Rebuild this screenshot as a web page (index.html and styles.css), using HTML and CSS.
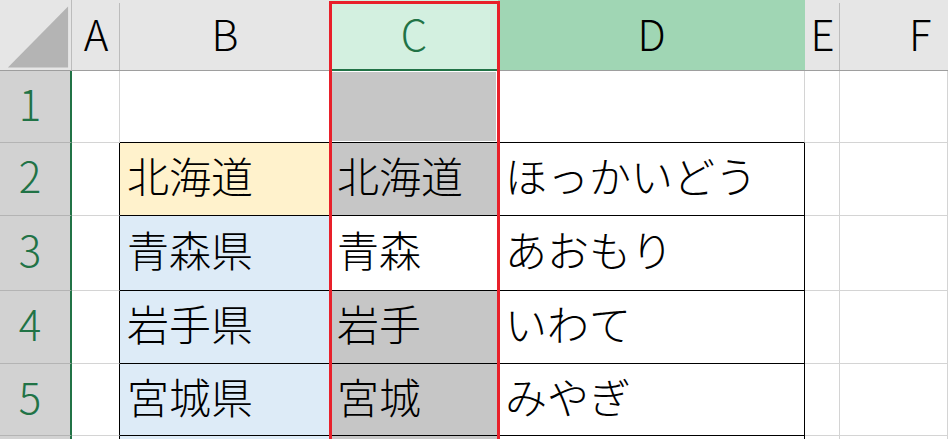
FILE: index.html
```html
<!DOCTYPE html>
<html lang="ja">
<head>
    <meta charset="utf-8" />
    <title>列の選択</title>
    <link rel="stylesheet" href="styles.css">
</head>
<body>
    <div class="sheet">
        <!-- 見出し行 -->
        <div class="cell corner">
            <svg width="72" height="71" viewBox="0 0 72 71"><polygon points="8,68 69,6 69,68" fill="#b4b4b4" /></svg>
        </div>
        <div class="cell ch">A</div>
        <div class="cell ch">B</div>
        <div class="cell ch sel">C</div>
        <div class="cell ch part">D</div>
        <div class="cell ch">E</div>
        <div class="cell ch last">F</div>

        <!-- 1 -->
        <div class="cell rh">1</div>
        <div class="cell"></div>
        <div class="cell bb"></div>
        <div class="cell bb gry active"></div>
        <div class="cell bb"></div>
        <div class="cell"></div>
        <div class="cell"></div>

        <!-- 2 -->
        <div class="cell rh">2</div>
        <div class="cell br"></div>
        <div class="cell bd yel">北海道</div>
        <div class="cell bd gry">北海道</div>
        <div class="cell bd">ほっかいどう</div>
        <div class="cell"></div>
        <div class="cell"></div>

        <!-- 3 -->
        <div class="cell rh">3</div>
        <div class="cell br"></div>
        <div class="cell bd blu">青森県</div>
        <div class="cell bd">青森</div>
        <div class="cell bd">あおもり</div>
        <div class="cell"></div>
        <div class="cell"></div>

        <!-- 4 -->
        <div class="cell rh">4</div>
        <div class="cell br"></div>
        <div class="cell bd blu">岩手県</div>
        <div class="cell bd gry">岩手</div>
        <div class="cell bd">いわて</div>
        <div class="cell"></div>
        <div class="cell"></div>

        <!-- 5 -->
        <div class="cell rh">5</div>
        <div class="cell br"></div>
        <div class="cell bd blu">宮城県</div>
        <div class="cell bd gry">宮城</div>
        <div class="cell bd">みやぎ</div>
        <div class="cell"></div>
        <div class="cell"></div>

        <!-- 6 (画面の下端で切れる行) -->
        <div class="cell rh"></div>
        <div class="cell br"></div>
        <div class="cell bd blu"></div>
        <div class="cell bd gry"></div>
        <div class="cell bd"></div>
        <div class="cell"></div>
        <div class="cell"></div>

        <!-- 赤枠 -->
        <div class="mark"></div>
    </div>
</body>
</html>
```

FILE: styles.css
```css
html, body {
    margin: 0;
    padding: 0;
    background: #fff;
    overflow: hidden;
}

.sheet {
    position: relative;
    display: grid;
    grid-template-columns: 72px 48px 210px 168px 307px 35px 108px;
    grid-template-rows: 71px 72px 73px 75px 73px 72px 60px;
    width: 948px;
    height: 439px;
    overflow: hidden;
    font-family: "Noto Sans CJK JP", "Noto Sans", sans-serif;
    font-size: 42px;
    font-weight: 300;
    color: #000;
}

.cell {
    box-sizing: border-box;
    display: flex;
    align-items: center;
    padding: 0 0 8px 7px;
    border-right: 1px solid #d4d4d4;
    border-bottom: 1px solid #d4d4d4;
    white-space: nowrap;
    overflow: hidden;
    line-height: 1;
}

/* 見出し */
.corner {
    padding: 0;
    background: #e6e6e6;
    border-right: 1px solid #bcbcbc;
    border-bottom: 1px solid #9e9e9e;
}

    .corner svg {
        display: block;
    }

.ch {
    justify-content: center;
    padding: 0 0 4px 0;
    border-right: 0;
    border-bottom: 1px solid #9e9e9e;
    background: linear-gradient(#bcbcbc, #bcbcbc) right 3px / 1px calc(100% - 3px) no-repeat, #e6e6e6;
}

    .ch.sel {
        color: #217346;
        border-bottom: 2px solid #217346;
        background: #d3f0e0;
    }

    .ch.part {
        background: #a0d6b4;
    }

    .ch.last {
        justify-content: flex-start;
        padding-left: 69px;
        background: #e6e6e6;
    }

.rh {
    justify-content: center;
    padding: 0 10px 8px 0;
    color: #217346;
    background: #d2d2d2;
    border-right: 2px solid #217346;
    border-bottom: 1px solid #b4b4b4;
}

/* 罫線 */
.bd {
    border-right-color: #000;
    border-bottom-color: #000;
}

.bb {
    border-bottom-color: #000;
}

.br {
    border-right-color: #000;
}

/* 塗りつぶし */
.yel {
    background: #fff2cc;
}

.blu {
    background: #ddebf7;
}

.gry {
    background: #c6c6c6;
}

.active {
    box-shadow: inset 0 0 0 1px #fff;
}

.mark {
    position: absolute;
    left: 329px;
    top: 1px;
    width: 171px;
    height: 500px;
    box-sizing: border-box;
    border: 3px solid #e8202a;
    pointer-events: none;
}
```
